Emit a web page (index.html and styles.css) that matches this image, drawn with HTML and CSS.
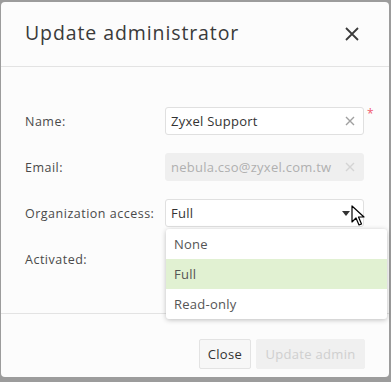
FILE: index.html
```html
<!DOCTYPE html>
<html lang="en">
  <head>
    <meta charset="UTF-8" />
    <title>Update administrator</title>
    <link rel="stylesheet" href="styles.css">
  </head>
  <body>
    <div class="modal">
      <div class="modal-header">
        <h2>Update administrator</h2>
        <span class="close-x">
          <svg width="14" height="14" viewBox="0 0 14 14"><path d="M1 1L13 13M13 1L1 13" stroke="#3b3b3b" stroke-width="1.8" fill="none"/></svg>
        </span>
      </div>

      <div class="modal-body">
        <div class="row">
          <label>Name:</label>
          <div class="field">
            <span class="value">Zyxel Support</span>
            <span class="clear">
              <svg width="10" height="10" viewBox="0 0 10 10"><path d="M1 1L9 9M9 1L1 9" stroke="#a0a0a0" stroke-width="1.4"/></svg>
            </span>
          </div>
          <span class="required">*</span>
        </div>

        <div class="row">
          <label>Email:</label>
          <div class="field disabled">
            <span class="value">nebula.cso@zyxel.com.tw</span>
            <span class="clear">
              <svg width="10" height="10" viewBox="0 0 10 10"><path d="M1 1L9 9M9 1L1 9" stroke="#d4d4d4" stroke-width="1.4"/></svg>
            </span>
          </div>
        </div>

        <div class="row">
          <label>Organization access:</label>
          <div class="field select">
            <span class="value">Full</span>
            <span class="caret"></span>
            <svg class="cursor" width="14" height="22" viewBox="0 0 14 22"><path d="M1 1L1 17L5 13L8 20L10.5 19L7.5 12L13 12Z" fill="#fff" stroke="#000" stroke-width="1.2" stroke-linejoin="round"/></svg>
            <ul class="menu">
              <li>None</li>
              <li class="active">Full</li>
              <li>Read-only</li>
            </ul>
          </div>
        </div>

        <div class="row">
          <label>Activated:</label>
        </div>
      </div>

      <div class="modal-footer">
        <button class="btn">Close</button>
        <button class="btn btn-primary" disabled>Update admin</button>
      </div>
    </div>
  </body>
</html>
```

FILE: styles.css
```css
body {
  margin: 0;
  background: #9c9c9c;
  font-family: "Open Sans", "Noto Sans", sans-serif;
  color: #444;
}

.modal {
  margin: 2px 2px 0 1px;
  width: 388px;
  height: 375px;
  background: #fcfcfc;
  border-radius: 4px;
  display: flex;
  flex-direction: column;
}

.modal-header {
  height: 64px;
  display: flex;
  align-items: center;
  justify-content: space-between;
  padding: 0 30px 0 24px;
  border-bottom: 1px solid #e3e3e3;
}

.modal-header h2 {
  margin: -3px 0 0;
  font-size: 19.5px;
  font-weight: normal;
  color: #3a3a3a;
  letter-spacing: 0.9px;
}

.close-x {
  display: flex;
  margin-top: -1px;
}

.modal-body {
  height: 247px;
  padding: 40px 0 0 24px;
  box-sizing: border-box;
  border-bottom: 1px solid #e3e3e3;
  display: flex;
  flex-direction: column;
  gap: 18px;
}

.row {
  display: flex;
  align-items: center;
  height: 28px;
}

.row label {
  width: 140px;
  font-size: 12.5px;
  letter-spacing: 0.5px;
  color: #4a4a4a;
}

.field {
  position: relative;
  width: 199px;
  height: 28px;
  box-sizing: border-box;
  border: 1px solid #e0e0e0;
  border-radius: 3px;
  background: #fff;
  display: flex;
  align-items: center;
  justify-content: space-between;
  padding: 0 8px 0 5px;
  font-size: 13px;
  letter-spacing: 0.25px;
  color: #333;
}

.field.disabled {
  background: #efefef;
  border-color: #efefef;
  color: #b0b0b0;
}

.clear {
  display: flex;
}

.required {
  align-self: flex-start;
  margin: -2px 0 0 3px;
  color: #f05a6e;
  font-size: 12px;
}

.caret {
  width: 0;
  height: 0;
  margin-right: 5px;
  border-left: 4px solid transparent;
  border-right: 4px solid transparent;
  border-top: 5px solid #333;
}

.cursor {
  position: absolute;
  right: -2px;
  top: 5px;
}

.menu {
  position: absolute;
  top: 29px;
  left: 0;
  width: 221px;
  margin: 0;
  padding: 0;
  list-style: none;
  background: #fff;
  border-radius: 3px;
  box-shadow: 0 1px 5px rgba(0, 0, 0, 0.25);
}

.menu li {
  height: 30px;
  line-height: 30px;
  padding-left: 8px;
  font-size: 13px;
  color: #555;
}

.menu li.active {
  background: #e1f1d2;
}

.modal-footer {
  flex: 1;
  display: flex;
  justify-content: flex-end;
  align-items: flex-start;
  gap: 5px;
  padding: 25px 24px 0 0;
}

.btn {
  height: 30px;
  padding: 0 8px;
  border: 1px solid #e3e3e3;
  border-radius: 2px;
  background: #f7f7f7;
  font-family: inherit;
  font-size: 13px;
  letter-spacing: 0.3px;
  color: #333;
}

.btn-primary {
  width: 109px;
  border-color: #f0f0f0;
  background: #f0f0f0;
  color: #cfcfcf;
}
```
